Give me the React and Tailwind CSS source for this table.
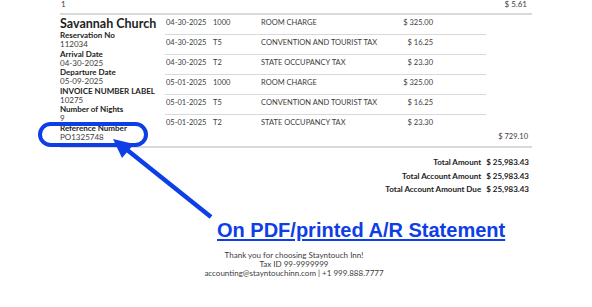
const rows = [
  { date: '04-30-2025', code: '1000', desc: 'ROOM CHARGE', amount: '$ 325.00' },
  { date: '04-30-2025', code: 'T5', desc: 'CONVENTION AND TOURIST TAX', amount: '$ 16.25' },
  { date: '04-30-2025', code: 'T2', desc: 'STATE OCCUPANCY TAX', amount: '$ 23.30' },
  { date: '05-01-2025', code: '1000', desc: 'ROOM CHARGE', amount: '$ 325.00' },
  { date: '05-01-2025', code: 'T5', desc: 'CONVENTION AND TOURIST TAX', amount: '$ 16.25' },
  { date: '05-01-2025', code: 'T2', desc: 'STATE OCCUPANCY TAX', amount: '$ 23.30' },
]

const details = [
  ['Reservation No', '112034'],
  ['Arrival Date', '04-30-2025'],
  ['Departure Date', '05-09-2025'],
  ['INVOICE NUMBER LABEL', '10275'],
  ['Number of Nights', '9'],
  ['Reference Number', 'PO1325748'],
]

const totals = [
  ['Total Amount', '$ 25,983.43'],
  ['Total Account Amount', '$ 25,983.43'],
  ['Total Account Amount Due', '$ 25,983.43'],
]

function App() {
  return (
    <div className="w-[592px] h-[307px] bg-white relative overflow-hidden font-['Lato',sans-serif] text-[#3c3c3c]">
      <div className="mx-auto w-[472px]">
        {/* previous total */}
        <div className="-mt-[1px] flex justify-between pl-[1px] pr-[5px] text-[8px] leading-[10px]">
          <span>1</span>
          <span>$ 5.61</span>
        </div>
        <div className="mt-[4px] h-[2px] bg-[#d9d9d9]"></div>

        <div className="flex">
          {/* Guest details */}
          <div className="w-[105px] pt-[1px] pb-[4px] whitespace-nowrap">
            <div className="text-[12.5px] leading-[15px] font-bold text-[#222]">Savannah Church</div>
            {details.map(([label, value]) => (
              <div key={label} className="text-[8px] leading-[9.25px]">
                <div className="font-bold text-[#222]">{label}</div>
                <div>{value}</div>
              </div>
            ))}
          </div>

          {/* Charges */}
          <div className="w-[321px] whitespace-nowrap">
            {rows.map((r, i) => (
              <div
                key={i}
                className={`flex h-[20px] pt-[2px] text-[7.5px] leading-[12px] ${i < rows.length - 1 ? 'border-b border-[#d9d9d9]' : ''}`}
              >
                <span className="w-[48px] pl-[1px]">{r.date}</span>
                <span className="w-[48px]">{r.code}</span>
                <span className="w-[135px]">{r.desc}</span>
                <span className="w-[37px] text-right">{r.amount}</span>
              </div>
            ))}
          </div>

          <div className="flex-1 flex items-end justify-end pb-[4px] pr-[4px] text-[7.5px] leading-[10px]">
            $ 729.10
          </div>
        </div>
        <div className="h-[2px] bg-[#d9d9d9]"></div>

        {/* Totals */}
        <div className="mt-[8px] flex justify-end pr-[3px]">
          <div className="grid grid-cols-[auto_auto] gap-x-[5px] text-[8px] leading-[13.5px] font-bold text-[#222]">
            {totals.map(([label, value]) => (
              <div key={label} className="contents">
                <span className="text-right">{label}</span>
                <span>{value}</span>
              </div>
            ))}
          </div>
        </div>
      </div>

      {/* Annotation */}
      <div className="mt-[21px] pl-[217px] font-['Liberation_Sans',Arial,sans-serif] text-[20px] leading-[24px] font-bold text-[#0d3ee6] underline decoration-[2px] underline-offset-[2px]">
        On PDF/printed A/R Statement
      </div>

      {/* Footer */}
      <div className="mt-[9px] text-center pr-[4px] text-[8px] leading-[9px] text-[#3c3c3c]">
        <div>Thank you for choosing Stayntouch Inn!</div>
        <div>Tax ID 99-9999999</div>
        <div>accounting@stayntouchinn.com | +1 999.888.7777</div>
      </div>

      <svg className="absolute inset-0 pointer-events-none" width="592" height="307" viewBox="0 0 592 307">
        <rect x="40" y="124" width="106" height="21" rx="10.5" fill="none" stroke="#0d3ee6" strokeWidth="4" />
        <line x1="211" y1="217" x2="126" y2="149" stroke="#0d3ee6" strokeWidth="4.5" />
        <polygon points="113,139 122,158 134,144" fill="#0d3ee6" />
      </svg>
    </div>
  )
}

export default App
